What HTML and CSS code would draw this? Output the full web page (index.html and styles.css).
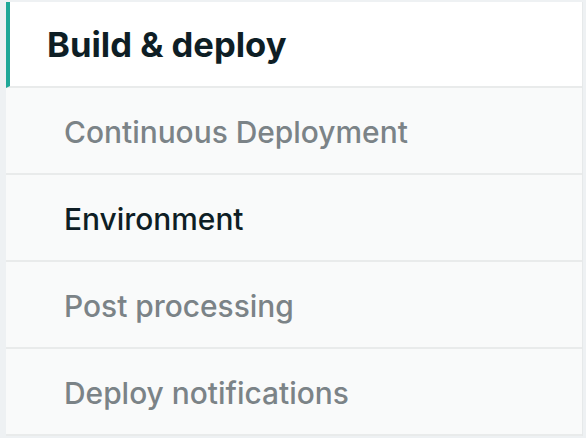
FILE: index.html
```html
<!DOCTYPE html>
<html>
<head>
<meta charset="utf-8">
<link rel="stylesheet" href="styles.css">
</head>
<body>
<nav class="sidenav">
  <div class="nav-head">Build &amp; deploy</div>
  <ul class="nav-list">
    <li class="nav-item">Continuous Deployment</li>
    <li class="nav-item active">Environment</li>
    <li class="nav-item">Post processing</li>
    <li class="nav-item">Deploy notifications</li>
  </ul>
</nav>
</body>
</html>
```

FILE: styles.css
```css
html, body {
  margin: 0;
  padding: 0;
  background: #eef1f3;
  height: 100%;
  overflow: hidden;
}
body {
  font-family: Inter, "Noto Sans", sans-serif;
  -webkit-font-smoothing: antialiased;
}
.sidenav {
  margin: 2px 0 0 6px;
  width: 576px;
  border-right: 1px solid #e6e9ea;
  background: #f9fafa;
}
.nav-head {
  box-sizing: border-box;
  height: 86px;
  border-left: 4px solid #1fa898;
  border-bottom: 2px solid #e9ebeb;
  background: #ffffff;
  padding-left: 37px;
  display: flex;
  align-items: center;
  font-size: 34.6px;
  font-weight: 700;
  color: #0e1e25;
}
.nav-list {
  list-style: none;
  margin: 0;
  padding: 0;
}
.nav-item {
  box-sizing: border-box;
  height: 87px;
  border-bottom: 2px solid #e9ebeb;
  padding-left: 58px;
  padding-top: 3px;
  display: flex;
  align-items: center;
  font-size: 29.9px;
  font-weight: 500;
  color: #7b8387;
}
.nav-item.active {
  color: #0e1e25;
}
```
